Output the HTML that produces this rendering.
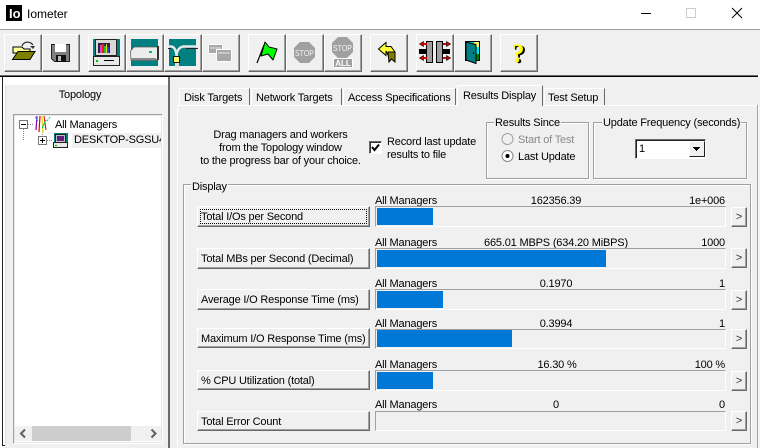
<!DOCTYPE html>
<html><head><meta charset="utf-8"><style>
html,body{margin:0;padding:0;width:760px;height:448px;overflow:hidden;background:#fff}
body{position:relative;font:11px/13px "Liberation Sans",sans-serif;color:#000;letter-spacing:-.18px}
div{position:absolute;box-sizing:border-box}
.t{white-space:nowrap}
.r{text-align:right}.c{text-align:center}
.tb{width:38px;height:38px;top:34px;background:#f0f0f0;border:1px solid;border-color:#fff #696969 #696969 #fff;box-shadow:inset -1px -1px 0 #a0a0a0}
.btn{left:197px;width:173px;background:#f0f0f0;border:1px solid;border-color:#fff #696969 #696969 #fff;box-shadow:inset -1px -1px 0 #a0a0a0;padding:4px 0 0 3px;white-space:nowrap}
.well{left:375px;width:351px;background:#f0f0f0;border:1px solid;border-color:#a0a0a0 #fff #fff #a0a0a0}
.bar{left:377px;background:#0078d7;height:17px}
.go{left:731px;width:16px;background:#f0f0f0;border:1px solid;border-color:#fff #696969 #696969 #fff;box-shadow:inset -1px -1px 0 #a0a0a0;text-align:center;line-height:18px;color:#333}
.grp{border:1px solid #a0a0a0;box-shadow:1px 1px 0 #fff, inset 1px 1px 0 #fff}
.lg{background:#f0f0f0;padding:0 1px;white-space:nowrap}
.tab{top:88px;height:17px;background:#f0f0f0;padding:3px 0 0 4px;white-space:nowrap;border-left:1px solid #fff;border-top:1px solid #fff;border-right:1px solid #696969}
</style></head><body>

<!-- Title bar -->
<div style="left:6px;top:5px;width:16px;height:16px;background:#000;overflow:hidden"></div>
<div class="t" style="left:9px;top:7px;width:13px;height:14px;color:#fff;font:bold 13px/14px 'Liberation Sans',sans-serif;letter-spacing:0;overflow:hidden">Io</div>
<div class="t" style="left:27px;top:7px;font-size:12px;line-height:15px;letter-spacing:0">Iometer</div>
<svg style="position:absolute;left:0;top:0" width="760" height="30" shape-rendering="crispEdges">
<rect x="641" y="13" width="10" height="1" fill="#000"/>
<rect x="686.5" y="8.5" width="9" height="9" fill="none" stroke="#ccc"/>
<path d="M732 8 L742 18 M742 8 L732 18" stroke="#000" fill="none" shape-rendering="auto"/>
</svg>
<div style="left:0;top:29px;width:760px;height:1px;background:#a0a0a0"></div>

<!-- Toolbar -->
<div style="left:0;top:30px;width:760px;height:45px;background:#f0f0f0"></div>
<div style="left:0;top:75px;width:758px;height:1px;background:#696969"></div>
<div style="left:0;top:76px;width:758px;height:1px;background:#000"></div>
<div class="tb" style="left:4px"></div><div class="tb" style="left:42px"></div>
<div class="tb" style="left:88px"></div><div class="tb" style="left:126px"></div><div class="tb" style="left:164px"></div><div class="tb" style="left:202px"></div>
<div class="tb" style="left:248px"></div><div class="tb" style="left:286px"></div><div class="tb" style="left:324px"></div>
<div class="tb" style="left:370px"></div>
<div class="tb" style="left:416px"></div><div class="tb" style="left:454px"></div>
<div class="tb" style="left:500px"></div>

<svg style="position:absolute;left:0;top:0;z-index:2;letter-spacing:0" width="560" height="76">
<!-- open -->
<path d="M13 47h9l2 2h6v4H13z" fill="#ffff99" stroke="#000"/>
<path d="M12.500 59.500L18 51.500H35L30 59.500Z" fill="#808000" stroke="#000"/>
<path d="M22 46C24 41 30 41 33 45" fill="none" stroke="#333" stroke-width="1.300"/>
<path d="M30 46h5l-2 3z" fill="#333"/>
<!-- save -->
<path d="M51.500 44.500H69.500V61.500H54.500L51.500 58.500Z" fill="#808080" stroke="#222"/>
<rect x="55" y="44" width="11" height="8" fill="#fff"/><rect x="56" y="55" width="10" height="7" fill="#111"/><rect x="58" y="56" width="3" height="5" fill="#bbb"/>
<!-- topology computer -->
<g shape-rendering="crispEdges">
<rect x="93" y="39" width="27" height="27" fill="#008080"/>
<rect x="95.500" y="39.500" width="21" height="16" fill="#d8d8d8" stroke="#222"/>
<rect x="98" y="43" width="12" height="10" fill="#302040"/>
<rect x="100" y="45" width="2" height="8" fill="#e040e0"/><rect x="102" y="44" width="2" height="9" fill="#e02020"/><rect x="104" y="46" width="2" height="7" fill="#20c020"/><rect x="106" y="44" width="1" height="9" fill="#e0e020"/><rect x="107" y="47" width="2" height="6" fill="#4040e0"/>
<rect x="93.500" y="56.500" width="26" height="9" fill="#e8e8e8" stroke="#222"/>
<rect x="96" y="60" width="2" height="2" fill="#00c000"/><rect x="104" y="60" width="10" height="1" fill="#000"/>
<!-- manager -->
<rect x="131" y="39" width="27" height="27" fill="#008080"/>
</g>
<path d="M130.500 51L134 47H158V58L156 60.500H131Z" fill="#ececec" stroke="#555" stroke-width=".7"/>
<rect x="131" y="58" width="25" height="2" fill="#888" shape-rendering="crispEdges"/>
<rect x="157" y="46" width="2" height="14" fill="#333" shape-rendering="crispEdges"/>
<rect x="149" y="51" width="3" height="2" fill="#00c060" shape-rendering="crispEdges"/>
<!-- worker -->
<rect x="169" y="39" width="27" height="27" fill="#008080" shape-rendering="crispEdges"/>
<path d="M167 46.500H171C174 46.500 176.500 50 176.500 57M198 46.500H184C180 46.500 176.500 50 176.500 57" fill="none" stroke="#e8e8e8" stroke-width="2.500"/>
<path d="M168 48.500H171M186 48.500H198" stroke="#222" fill="none"/>
<rect x="175" y="62" width="4" height="6" fill="#e0e0e0" shape-rendering="crispEdges"/>
<rect x="173.500" y="56.500" width="6" height="6" fill="#ffff66" stroke="#111" shape-rendering="crispEdges"/>
<!-- disabled manager/worker -->
<g shape-rendering="crispEdges" fill="#a8a8a8" stroke="#fff">
<rect x="208.500" y="44.500" width="14" height="9"/><rect x="216.500" y="49.500" width="15" height="12"/>
</g>
<rect x="210" y="47" width="11" height="2" fill="#c8c8c8" shape-rendering="crispEdges"/><rect x="218" y="52" width="12" height="2" fill="#c8c8c8" shape-rendering="crispEdges"/>
<!-- flag -->
<path d="M257 63L264 45" stroke="#000" stroke-width="1.200" fill="none"/>
<path d="M265 42L269 47L277 49L273 60L268 54L261 56Z" fill="#00ff00" stroke="#000" stroke-linejoin="round"/>
<!-- stop -->
<path d="M300 42H309L315 48V57L309 63H300L294 57V48Z" fill="#a0a0a0"/>
<text x="295" y="56" textLength="19" lengthAdjust="spacingAndGlyphs" font-family="Liberation Sans" font-size="8.500" fill="#f4f4f4">STOP</text>
<path d="M338 37H347L353 43V52L347 58H338L332 52V43Z" fill="#a0a0a0"/>
<text x="333" y="51" textLength="19" lengthAdjust="spacingAndGlyphs" font-family="Liberation Sans" font-size="8.500" fill="#f4f4f4">STOP</text>
<rect x="333.500" y="58.500" width="19" height="9" fill="#a0a0a0" stroke="#fff" shape-rendering="crispEdges"/>
<text x="343" y="66" text-anchor="middle" font-family="Liberation Sans" font-size="8" font-weight="bold" fill="#fff">ALL</text>
<!-- back -->
<path d="M378.500 49L386 42.500V46.500H391L395 52V55H388L386 51V55.500Z" fill="#ffff33" stroke="#000"/>
<path d="M388 52H395V62L391.500 59L389 62Z" fill="#808000" stroke="#000"/>
<!-- rearrange -->
<g shape-rendering="crispEdges">
<rect x="419" y="49" width="8" height="5" fill="#000"/><rect x="443" y="49" width="7" height="5" fill="#000"/>
<rect x="426.500" y="41.500" width="6" height="21" fill="#a0a0a0" stroke="#000"/>
<rect x="436.500" y="41.500" width="6" height="21" fill="#a0a0a0" stroke="#000"/>
<rect x="423" y="43" width="4" height="2" fill="#e00000"/><rect x="423" y="57" width="4" height="2" fill="#e00000"/>
<rect x="443" y="43" width="4" height="2" fill="#e00000"/><rect x="443" y="57" width="4" height="2" fill="#e00000"/>
</g>
<path d="M423.500 41.500L419.500 44L423.500 46.500ZM423.500 55.500L419.500 58L423.500 60.500ZM446.500 41.500L450.500 44L446.500 46.500ZM446.500 55.500L450.500 58L446.500 60.500Z" fill="#e00000" stroke="#000" stroke-width=".6"/>
<!-- door -->
<g shape-rendering="crispEdges">
<rect x="465.500" y="41.500" width="14" height="19" fill="#00e8e8" stroke="#000"/>
<rect x="474" y="42" width="5" height="5" fill="#ffff66"/>
<rect x="476" y="54" width="3" height="6" fill="#008000"/>
</g>
<path d="M466 42L476 44.500V63.500L466 60Z" fill="#008080" stroke="#000"/>
<rect x="473" y="52" width="1" height="2" fill="#000"/>
<!-- help -->
<text x="520" y="63" text-anchor="middle" font-family="Liberation Serif" font-size="26" font-weight="bold" fill="#000">?</text>
<text x="518" y="62" text-anchor="middle" font-family="Liberation Serif" font-size="26" font-weight="bold" fill="#ffff00">?</text>
</svg>

<!-- Left panel -->
<div style="left:0;top:77px;width:2px;height:371px;background:#fff"></div>
<div style="left:2px;top:77px;width:1px;height:369px;background:#222"></div>
<div style="left:3px;top:445px;width:3px;height:1px;background:#222"></div>
<div style="left:5px;top:84px;width:163px;height:364px;background:#f0f0f0;border-left:1px solid #e3e3e3;border-top:1px solid #fff"></div>
<div style="left:3px;top:77px;width:165px;height:7px;background:#fff"></div>
<div style="left:168px;top:77px;width:2px;height:371px;background:#696969"></div>
<div style="left:170px;top:77px;width:590px;height:371px;background:#f0f0f0"></div>
<div class="c" style="left:5px;top:89px;width:150px;font-size:11px">Topology</div>
<div style="left:13px;top:114px;width:150px;height:330px;background:#fff;border:1px solid;border-color:#a0a0a0 #fff #fff #a0a0a0;outline:1px solid #e8e8e8;outline-offset:-2px"></div>

<svg style="position:absolute;left:0;top:0;z-index:2" width="170" height="160">
<g shape-rendering="crispEdges">
<rect x="19.500" y="120.500" width="8" height="8" fill="#fff" stroke="#777"/><rect x="21" y="124" width="5" height="1" fill="#000"/>
<rect x="38.500" y="136.500" width="8" height="8" fill="#fff" stroke="#777"/><rect x="40" y="140" width="5" height="1" fill="#000"/><rect x="42" y="138" width="1" height="5" fill="#000"/>
<path d="M28 124.500h5M47 140.500h5M23.500 129v11M42.500 130v6" stroke="#888" stroke-dasharray="1 1" fill="none"/>
<rect x="54" y="133" width="14" height="14" fill="#008080"/>
<rect x="55.500" y="134.500" width="10" height="8" fill="#c0c0c0" stroke="#222"/>
<rect x="57" y="136" width="7" height="5" fill="#602080"/>
<rect x="53.500" y="142.500" width="14" height="5" fill="#e8e8e8" stroke="#222"/>
<rect x="55" y="145" width="2" height="1" fill="#00b000"/>
</g>
<path d="M37 116L36 130" stroke="#8000a0" fill="none" stroke-width="1.200"/>
<path d="M40 116L39 132" stroke="#e00000" fill="none" stroke-width="1.200"/>
<path d="M42 116L43 133" stroke="#e0e000" fill="none" stroke-width="1.200"/>
<path d="M44 116L46 130" stroke="#e00000" fill="none" stroke-width="1"/>
<path d="M46 120L42 128" stroke="#00c060" fill="none"/>
<path d="M35 117L38 121M50 117L47 121" stroke="#00c0c0" fill="none" stroke-dasharray="2 1"/>
</svg>
<div class="t" style="left:55px;top:118px;margin-top:1px">All Managers</div>
<div style="left:72px;top:133px;width:89px;height:15px;background:#f0f0f0"></div>
<div class="t" style="left:74px;top:134px;width:87px;overflow:hidden">DESKTOP-SGSU4</div>

<!-- H scrollbar -->
<div style="left:15px;top:426px;width:146px;height:15px;background:#f0f0f0"></div>
<div style="left:32px;top:426px;width:99px;height:15px;background:#cdcdcd"></div>
<svg style="position:absolute;left:0;top:420px;z-index:2" width="170" height="28">
<path d="M25 9.500L21 13.500L25 17.500M151.500 9.500L155.500 13.500L151.500 17.500" fill="none" stroke="#606060" stroke-width="2"/>
</svg>

<!-- Tab page -->
<div style="left:177px;top:105px;width:581px;height:343px;background:#f0f0f0;border:1px solid;border-color:#fff #a0a0a0 #fff #fff;border-bottom:0"></div>
<div style="left:757px;top:105px;width:1px;height:343px;background:#a0a0a0"></div>
<div style="left:758px;top:105px;width:1px;height:343px;background:#fff"></div>
<div class="tab" style="left:179px;width:71px">Disk Targets</div>
<div class="tab" style="left:251px;width:91px">Network Targets</div>
<div class="tab" style="left:343px;width:113px">Access Specifications</div>
<div class="tab" style="left:457px;top:85px;width:86px;height:21px;padding:4px 0 0 5px;z-index:2">Results Display</div>
<div class="tab" style="left:544px;width:61px;padding-left:3px">Test Setup</div>

<!-- Drag text -->
<div class="c t" style="left:200px;top:129px;width:161px">Drag managers and workers<br>from the Topology window<br>to the progress bar of your choice.</div>

<!-- checkbox -->
<div style="left:369px;top:141px;width:13px;height:13px;background:#fff;border:1px solid;border-color:#696969 #fff #fff #696969;box-shadow:inset 1px 1px 0 #333"></div>
<svg style="position:absolute;left:369px;top:141px" width="13" height="13"><path d="M3 6L5.500 9L10 3.500" fill="none" stroke="#000" stroke-width="2"/></svg>
<div class="t" style="left:387px;top:136px">Record last update<br>results to file</div>

<!-- Results Since -->
<div class="grp" style="left:486px;top:122px;width:103px;height:57px"></div>
<div class="lg" style="left:494px;top:117px">Results Since</div>
<svg style="position:absolute;left:500px;top:132px" width="16" height="32">
<circle cx="7.500" cy="7" r="5.500" fill="#f0f0f0" stroke="#a0a0a0"/>
<circle cx="7.500" cy="24" r="5.500" fill="#fff" stroke="#888"/><circle cx="7.500" cy="24" r="2" fill="#000"/>
</svg>
<div class="t" style="left:518px;top:134px;color:#8a8a8a">Start of Test</div>
<div class="t" style="left:518px;top:151px">Last Update</div>

<!-- Update Frequency -->
<div class="grp" style="left:593px;top:122px;width:154px;height:57px"></div>
<div class="lg" style="left:602px;top:117px">Update Frequency (seconds)</div>
<div style="left:635px;top:139px;width:71px;height:20px;background:#fff;border:1px solid;border-color:#696969 #fff #fff #696969;box-shadow:inset 1px 1px 0 #222;padding:3px 0 0 3px">1</div>
<div style="left:689px;top:141px;width:16px;height:16px;background:#f0f0f0;border:1px solid;border-color:#fff #222 #222 #fff"></div>
<svg style="position:absolute;left:689px;top:141px" width="16" height="16" shape-rendering="crispEdges"><path d="M4 6h7v1h-1v1h-1v1h-1v1h-1v-1h-1v-1h-1v-1h-1z" fill="#000"/></svg>

<!-- Display group -->
<div class="grp" style="left:183px;top:184px;width:568px;height:260px"></div>
<div class="lg" style="left:191px;top:181px">Display</div>

<!-- Row 1 -->
<div class="t" style="left:375px;top:195px">All Managers</div>
<div class="t c" style="left:456px;top:195px;width:200px">162356.39</div>
<div class="t r" style="left:625px;top:195px;width:100px">1e+006</div>
<div class="btn" style="top:206px;height:21px">Total I/Os per Second</div>
<div style="left:200px;top:209px;width:167px;height:15px;border:1px dotted #000;z-index:1"></div>
<div class="well" style="top:206px;height:21px"></div><div class="bar" style="top:208px;width:56px"></div>
<div class="go" style="top:207px;height:20px">&gt;</div>

<!-- Row 2 -->
<div class="t" style="left:375px;top:237px">All Managers</div>
<div class="t c" style="left:456px;top:237px;width:200px">665.01 MBPS (634.20 MiBPS)</div>
<div class="t r" style="left:625px;top:237px;width:100px">1000</div>
<div class="btn" style="top:248px;height:21px">Total MBs per Second (Decimal)</div>
<div class="well" style="top:248px;height:21px"></div><div class="bar" style="top:250px;width:229px"></div>
<div class="go" style="top:248px;height:20px">&gt;</div>

<!-- Row 3 -->
<div class="t" style="left:375px;top:278px">All Managers</div>
<div class="t c" style="left:456px;top:278px;width:200px">0.1970</div>
<div class="t r" style="left:625px;top:278px;width:100px">1</div>
<div class="btn" style="top:289px;height:21px">Average I/O Response Time (ms)</div>
<div class="well" style="top:289px;height:21px"></div><div class="bar" style="top:291px;width:66px"></div>
<div class="go" style="top:290px;height:20px">&gt;</div>

<!-- Row 4 -->
<div class="t" style="left:375px;top:318px">All Managers</div>
<div class="t c" style="left:456px;top:318px;width:200px">0.3994</div>
<div class="t r" style="left:625px;top:318px;width:100px">1</div>
<div class="btn" style="top:328px;height:20px">Maximum I/O Response Time (ms)</div>
<div class="well" style="top:329px;height:20px"></div><div class="bar" style="top:330px;width:135px"></div>
<div class="go" style="top:329px;height:20px">&gt;</div>

<!-- Row 5 -->
<div class="t" style="left:375px;top:359px">All Managers</div>
<div class="t c" style="left:457px;top:359px;width:200px">16.30 %</div>
<div class="t r" style="left:625px;top:359px;width:100px">100 %</div>
<div class="btn" style="top:370px;height:20px">% CPU Utilization (total)</div>
<div class="well" style="top:370px;height:21px"></div><div class="bar" style="top:372px;width:56px"></div>
<div class="go" style="top:371px;height:20px">&gt;</div>

<!-- Row 6 -->
<div class="t" style="left:375px;top:399px">All Managers</div>
<div class="t c" style="left:456px;top:399px;width:200px">0</div>
<div class="t r" style="left:625px;top:399px;width:100px">0</div>
<div class="btn" style="top:411px;height:20px">Total Error Count</div>
<div class="well" style="top:411px;height:20px"></div>
<div class="go" style="top:411px;height:20px">&gt;</div>

</body></html>
